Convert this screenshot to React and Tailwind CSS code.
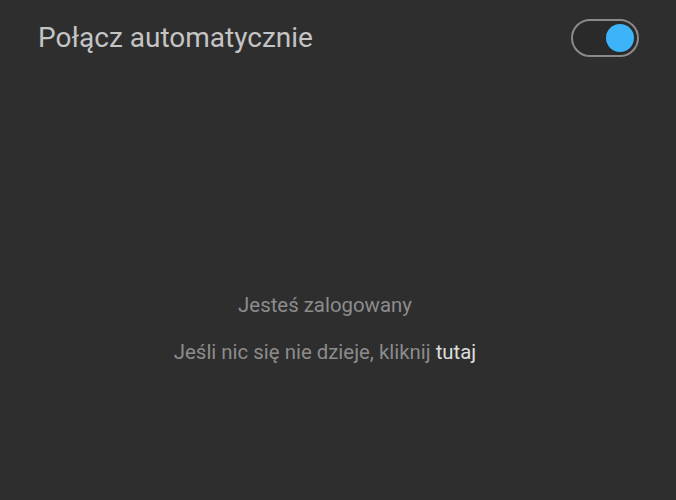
export default function App() {
  return (
    <div className="flex h-[500px] w-[676px] flex-col bg-[#2e2e2e] font-['Roboto',sans-serif]">
      <div className="flex items-center justify-between pl-[38px] pr-[37px] pt-[18px]">
        <span className="text-[28px] leading-[40px] text-[#c4c4c4]">Połącz automatycznie</span>
        <button className="flex h-[38px] w-[68px] items-center justify-end rounded-full border-2 border-[#8a8a8a] bg-[#2a2a2a] pr-[3px]">
          <span className="h-[28px] w-[28px] rounded-full bg-[#3db4f9]" />
        </button>
      </div>
      <div className="mt-[234px] flex flex-col items-center pr-[26px] text-[20.4px] text-[#8c8c8c]">
        <p className="leading-[26px]">Jesteś zalogowany</p>
        <p className="mt-[21px] leading-[26px]">
          Jeśli nic się nie dzieje, kliknij <span className="text-[#dedede]">tutaj</span>
        </p>
      </div>
    </div>
  );
}
